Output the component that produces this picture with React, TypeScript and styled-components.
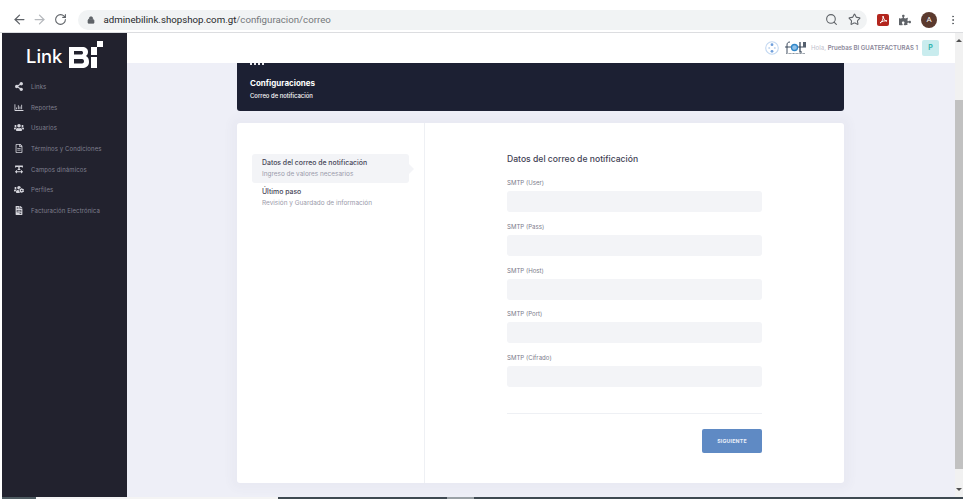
import React from "react";
import styled, { createGlobalStyle } from "styled-components";
import { ArrowLeft, ArrowRight, RotateCw, Lock, Search, Star, MoreVertical } from "lucide-react";
import { FaShareAlt, FaRegChartBar, FaUsers, FaRegFileAlt, FaTextWidth, FaUsersCog, FaFileInvoice, FaPuzzlePiece } from "react-icons/fa";

const Global = createGlobalStyle`
  html, body { margin: 0; padding: 0; width: 963px; height: 501px; overflow: hidden; background: #fff; }
  * { box-sizing: border-box; }
  body { font-family: "Inter", "Open Sans", sans-serif; }
`;
const Page = styled.div`
  width: 963px; height: 501px; display: flex; flex-direction: column; overflow: hidden; background: #fff;
`;
const Chrome = styled.div`
  height: 33px; flex: none; display: flex; align-items: center; padding: 9px 0 2px 9px; border-bottom: 1px solid #dcdde0; background: #fff;
  color: #5f6368;
`;
const NavBtn = styled.span<{ $dim?: boolean }>`
  width: 20.5px; display: flex; justify-content: center; align-items: center; color: ${p => (p.$dim ? "#b6b9bd" : "#5f6368")};
`;
const Omni = styled.div`
  margin-left: 7.5px; width: 789px; height: 20px; border-radius: 10px; background: #f1f3f4; display: flex; align-items: center; padding: 0 6px 0 9px; gap: 8.5px; flex: none;
`;
const Url = styled.div`
  flex: 1; font-family: "Roboto", sans-serif; font-size: 9.7px; color: #74777b; white-space: nowrap;
  b { font-weight: 400; color: #26282b; }
`;
const OmniIcons = styled.div`
  display: flex; align-items: center; gap: 10px; color: #5f6368;
`;
const Ext = styled.div`
  display: flex; align-items: center; gap: 10px; margin-left: 10px;
`;
const PdfBadge = styled.span`
  width: 12px; height: 12px; border-radius: 2px; background: #b3261e; display: flex; align-items: center; justify-content: center;
`;
const Avatar = styled.span`
  width: 16px; height: 16px; border-radius: 50%; background: #5b3a2e; color: #fff; font: 400 8px "Roboto", sans-serif; display: flex; align-items: center; justify-content: center;
`;
const Body = styled.div`
  height: 464px; flex: none; display: flex; padding-left: 2px;
`;
const Sidebar = styled.aside`
  width: 125px; flex: none; background: #22222e; padding-top: 6px;
`;
const Logo = styled.div`
  height: 36px; display: flex; align-items: flex-start; padding-left: 24px; gap: 5px; color: #fff;
`;
const LinkWord = styled.span`
  font: 500 18.4px/24px "Inter", sans-serif; margin-top: 5px; width: 37px; white-space: nowrap;
`;
const Menu = styled.nav`
  display: flex; flex-direction: column; margin-top: 1px;
`;
const MenuRow = styled.div`
  height: 20.7px; display: flex; align-items: center; padding-left: 12px; gap: 7px; color: #80808f; font-size: 6px; white-space: nowrap; letter-spacing: .1px;
  svg { color: #d6d6dd; flex: none; width: 10px; height: 9px; }
`;
const Main = styled.div`
  flex: 1; min-width: 0; display: flex; flex-direction: column; background: #eeeff7;
`;
const TopBar = styled.header`
  height: 30px; flex: none; background: #fff; display: flex; align-items: center; justify-content: flex-end; padding: 0 16px 1px 0;
`;
const Hello = styled.span`
  font-size: 6.1px; color: #c0c0cc; margin: 0 4px 0 5px; white-space: nowrap;
  b { color: #8b8799; font-weight: 600; }
`;
const UserChip = styled.span`
  width: 17px; height: 16px; border-radius: 2px; background: #c9ecee; color: #35b5ae; font-size: 7px; font-weight: 700; display: flex; align-items: center; justify-content: center;
`;
const Content = styled.div`
  flex: 1; min-height: 0; padding-left: 110px;
`;
const Banner = styled.section`
  width: 607px; height: 48px; background: #1c2033; border-radius: 0 0 3px 3px; padding: 0 0 0 13px; color: #fff;
`;
const CutOff = styled.div`
  width: 15px; height: 2px; margin-bottom: 13px;
  background: repeating-linear-gradient(90deg, #e8e8ee 0 2px, transparent 2px 4px);
`;
const BannerTitle = styled.div`
  font-size: 8px; font-weight: 700; line-height: 11px;
`;
const BannerSub = styled.div`
  font-size: 5.9px; line-height: 9px; margin-top: 2px; font-weight: 500;
`;
const Card = styled.section`
  width: 607px; height: 360px; margin-top: 12px; background: #fff; border-radius: 3px; display: flex; box-shadow: 0 0 10px 6px rgba(82, 90, 105, .035);
`;
const Steps = styled.div`
  width: 188px; flex: none; border-right: 1px solid #eef0f4; padding: 31px 15px 0 15px;
`;
const Step = styled.div<{ $active?: boolean }>`
  width: 157px; height: 29px; border-radius: 3px; padding: 4px 0 0 10px; position: relative; background: ${p => (p.$active ? "#f3f4f7" : "transparent")};
  ${p => p.$active && `&::after { content: ""; position: absolute; right: -5px; top: 10px; border-left: 5px solid #f3f4f7; border-top: 5px solid transparent; border-bottom: 5px solid transparent; }`}
`;
const StepTitle = styled.div`
  font-size: 6.9px; line-height: 9px; font-weight: 500; color: #464658; white-space: nowrap;
`;
const StepSub = styled.div`
  font-size: 6.45px; line-height: 8px; margin-top: 3px; color: #9a9aaa; white-space: nowrap;
`;
const Form = styled.div`
  flex: 1; padding: 30px 0 0 82px;
`;
const FormTitle = styled.h3`
  margin: 0; font-size: 8.6px; line-height: 12px; font-weight: 500; color: #3f4254;
`;
const Field = styled.div`
  width: 255px; margin-top: 14px; & + & { margin-top: 10.75px; }
`;
const Label = styled.label`
  display: block; font-size: 6.1px; line-height: 8px; color: #7c7c8c; margin-bottom: 4px; height: 8px;
`;
const Input = styled.div`
  height: 21px; background: #f3f4f7; border-radius: 3px;
`;
const Divider = styled.div`
  width: 255px; height: 1px; background: #eef0f4; margin-top: 26px;
`;
const Actions = styled.div`
  width: 255px; display: flex; justify-content: flex-end; margin-top: 15px;
`;
const Button = styled.button`
  width: 60px; height: 24px; border: 0; border-radius: 2px; background: #5f8ac4; color: #e8eef8; font: 700 5.2px "Inter", sans-serif; letter-spacing: .2px; padding: 0;
`;
const Scrollbar = styled.div`
  width: 8px; flex: none; background: #f1f1f1; display: flex; flex-direction: column; align-items: center;
`;
const ScrollArrow = styled.span<{ $down?: boolean }>`
  height: 15px; flex: none; display: flex; align-items: center; justify-content: center;
  &::before { content: ""; border-left: 3px solid transparent; border-right: 3px solid transparent; ${p => (p.$down ? "border-top: 3px solid #505050;" : "border-bottom: 3px solid #505050;")} }
`;
const ScrollGap = styled.span`
  height: 52px; flex: none;
`;
const Thumb = styled.span`
  width: 100%; height: 369px; flex: none; background: #c1c1c1;
`;
const ScrollEnd = styled(ScrollArrow)`
  margin-top: auto;
`;
const Edge = styled.div`
  height: 2px; flex: none; display: flex; padding-left: 2px;
`;
const EdgePart = styled.span<{ $w: number; $c: string }>`
  width: ${p => p.$w}px; background: ${p => p.$c}; flex: none;
`;

const menu: [string, React.ElementType][] = [
  ["Links", FaShareAlt], ["Reportes", FaRegChartBar], ["Usuarios", FaUsers], ["Términos y Condiciones", FaRegFileAlt],
  ["Campos dinámicos", FaTextWidth], ["Perfiles", FaUsersCog], ["Facturación Electrónica", FaFileInvoice],
];
const fields = ["SMTP (User)", "SMTP (Pass)", "SMTP (Host)", "SMTP (Port)", "SMTP (Cifrado)"];

const BiMark = () => (
  <svg width="36" height="30" viewBox="0 0 36 30" fill="#fff">
    <path fillRule="evenodd" d="M1 8h13c4 0 6 2 6 5 0 2-1 3-2 4 2 1 3 3 3 6 0 4-3 6-7 6H1zm5 4v3.500h7c1.500 0 2-.8 2-1.800s-.5-1.700-2-1.700zm0 8v4.500h8c1.500 0 2-1 2-2.200s-.5-2.300-2-2.300z" />
    <rect x="23" y="18" width="6" height="11" />
    <rect x="23" y="8" width="6" height="8" />
    <rect x="29" y="2" width="6" height="6" />
  </svg>
);
const Wheel = () => (
  <svg width="14" height="14" viewBox="0 0 14 14">
    <circle cx="7" cy="7" r="6.300" fill="#fff" stroke="#c3d8f1" strokeWidth="1.100" />
    <circle cx="7" cy="3.700" r="1.400" fill="#6f9fdc" />
    <circle cx="7" cy="10.300" r="1.400" fill="#6f9fdc" />
    <circle cx="4.200" cy="7" r="1" fill="#c3d8f1" />
    <circle cx="9.800" cy="7" r="1" fill="#c3d8f1" />
  </svg>
);
const FelMark = () => (
  <svg width="21" height="14" viewBox="0 0 21 14" style={{ marginLeft: 6 }}>
    <path d="M2 12V4c0-2 1-3 3-3M0 6h21" stroke="#2a3a4e" strokeWidth=".9" fill="none" />
    <circle cx="9.500" cy="6.500" r="3" fill="#8fc0e8" stroke="#2f86c8" strokeWidth="1.300" />
    <path d="M15 1v10h2" stroke="#2a3a4e" strokeWidth="1.200" fill="none" />
    <rect x="18" y="1" width="3" height="5" fill="#55606e" />
    <path d="M1 12.500h19" stroke="#6b7683" strokeWidth=".8" strokeDasharray="1 .4" />
  </svg>
);

export default function App() {
  return (
    <Page>
      <Global />
      <Chrome>
        <NavBtn><ArrowLeft size={15} /></NavBtn>
        <NavBtn $dim><ArrowRight size={15} /></NavBtn>
        <NavBtn><RotateCw size={13} /></NavBtn>
        <Omni>
          <Lock size={8} fill="#5f6368" color="#5f6368" />
          <Url><b>adminebilink.shopshop.com.gt</b>/configuracion/correo</Url>
          <OmniIcons><Search size={13} /><Star size={13} /></OmniIcons>
        </Omni>
        <Ext>
          <PdfBadge><svg width="9" height="9" viewBox="0 0 9 9" fill="none" stroke="#fff" strokeWidth="1"><path d="M4 1c.5 3-1 6-3 7 2-2 5-2.500 7-2-2 0-3.500-2-4-5z" /></svg></PdfBadge>
          <FaPuzzlePiece size={12} color="#5f6368" />
          <Avatar>A</Avatar>
          <MoreVertical size={12} />
        </Ext>
      </Chrome>
      <Body>
        <Sidebar>
          <Logo><LinkWord>Link</LinkWord><BiMark /></Logo>
          <Menu>
            {menu.map(([label, Icon]) => (
              <MenuRow key={label}><Icon />{label}</MenuRow>
            ))}
          </Menu>
        </Sidebar>
        <Main>
          <TopBar>
            <Wheel /><FelMark />
            <Hello>Hola, <b>Pruebas BI GUATEFACTURAS 1</b></Hello>
            <UserChip>P</UserChip>
          </TopBar>
          <Content>
            <Banner>
              <CutOff />
              <BannerTitle>Configuraciones</BannerTitle>
              <BannerSub>Correo de notificación</BannerSub>
            </Banner>
            <Card>
              <Steps>
                <Step $active>
                  <StepTitle>Datos del correo de notificación</StepTitle>
                  <StepSub>Ingreso de valores necesarios</StepSub>
                </Step>
                <Step>
                  <StepTitle>Último paso</StepTitle>
                  <StepSub>Revisión y Guardado de información</StepSub>
                </Step>
              </Steps>
              <Form>
                <FormTitle>Datos del correo de notificación</FormTitle>
                {fields.map(f => (
                  <Field key={f}><Label>{f}</Label><Input /></Field>
                ))}
                <Divider />
                <Actions><Button>SIGUIENTE</Button></Actions>
              </Form>
            </Card>
          </Content>
        </Main>
        <Scrollbar>
          <ScrollArrow />
          <ScrollGap />
          <Thumb />
          <ScrollEnd $down />
        </Scrollbar>
      </Body>
      <Edge>
        <EdgePart $w={34} $c="#4f5c62" />
        <EdgePart $w={242} $c="#f4f4f4" />
        <EdgePart $w={169} $c="#3f4a52" />
        <EdgePart $w={27} $c="#9aa1a6" />
        <EdgePart $w={489} $c="#3f4a52" />
      </Edge>
    </Page>
  );
}
